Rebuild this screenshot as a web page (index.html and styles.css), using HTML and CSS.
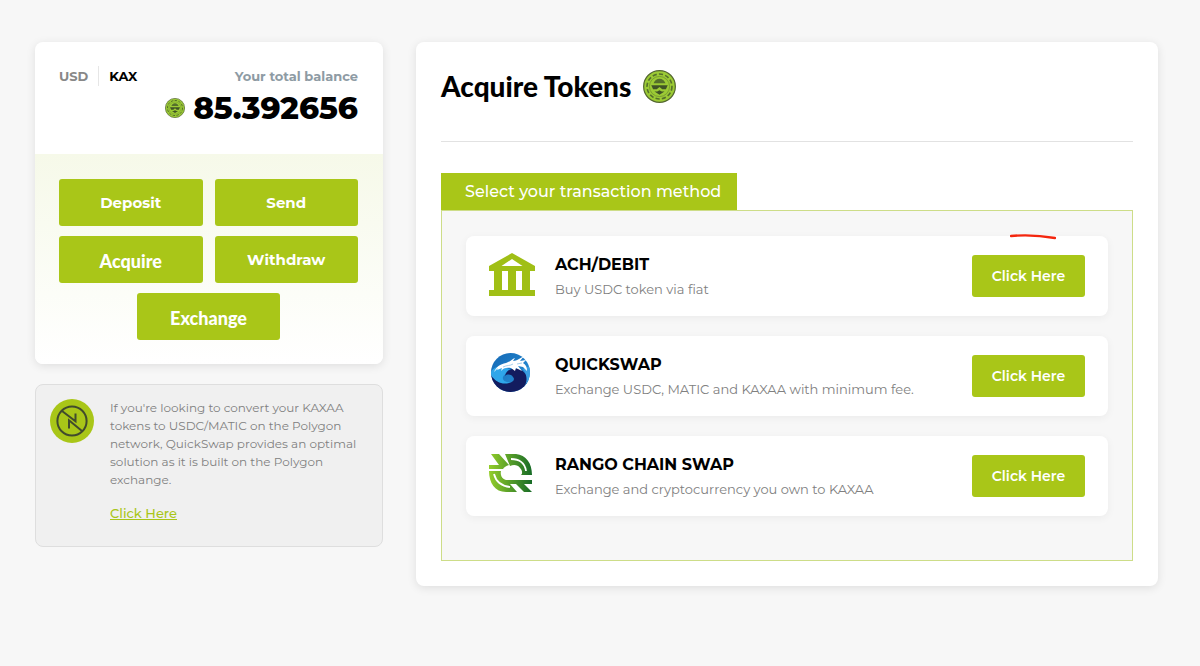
FILE: index.html
```html
<!DOCTYPE html>
<html lang="en">
<head>
    <meta charset="UTF-8">
    <meta name="viewport" content="width=device-width, initial-scale=1.0">
    <title>Acquire Tokens</title>
    <link rel="stylesheet" href="styles.css">
</head>
<body>
    <svg class="defs" aria-hidden="true">
        <symbol id="coin" viewBox="0 0 36 36">
            <circle cx="18" cy="18" r="17.3" fill="#9ccb35" stroke="#53662f" stroke-width="1.3"/>
            <circle cx="18" cy="18" r="13.6" fill="none" stroke="#55702b" stroke-width="1.8" stroke-dasharray="4.6 2.4"/>
            <circle cx="18" cy="18" r="11" fill="#9ccb35" stroke="#6c8d2e" stroke-width="0.8"/>
            <path d="M11.5 14.5c1-3 3.5-5 6.5-5s5.5 2 6.5 5z" fill="#55702b"/>
            <path d="M9 16.5h18l-2 4.5h-4l-3-2.5-3 2.5h-4z" fill="#405426"/>
            <path d="M12.500 23.500h3l2.500-1.500 2.500 1.500h3L18 27z" fill="#405426"/>
        </symbol>
    </svg>

    <main class="container">
        <aside class="sidebar">
            <section class="wallet">
                <div class="wallet-top">
                    <div class="currency">
                        <button type="button" class="currency-btn">USD</button>
                        <button type="button" class="currency-btn active">KAX</button>
                    </div>
                    <div class="balance">
                        <span class="balance-label">Your total balance</span>
                        <span class="balance-value">
                            <svg class="coin-small" aria-hidden="true"><use href="#coin"/></svg>
                            85.392656
                        </span>
                    </div>
                </div>
                <div class="wallet-actions">
                    <button type="button" class="btn">Deposit</button>
                    <button type="button" class="btn">Send</button>
                    <button type="button" class="btn btn-alt">Acquire</button>
                    <button type="button" class="btn">Withdraw</button>
                    <button type="button" class="btn btn-alt">Exchange</button>
                </div>
            </section>

            <section class="info">
                <svg class="info-icon" viewBox="0 0 44 44" aria-hidden="true">
                    <circle cx="22" cy="22" r="22" fill="#a9c618"/>
                    <g fill="none" stroke="#414b2d" stroke-width="2">
                        <circle cx="22" cy="22" r="14.6"/>
                        <path d="M11.7 11.7L25.5 22.200V14.5"/>
                        <path d="M32.3 32.3L19 21.3V29.5"/>
                    </g>
                </svg>
                <div>
                    <p class="info-text">If you're looking to convert your KAXAA tokens to USDC/MATIC on the Polygon network, QuickSwap provides an optimal solution as it is built on the Polygon exchange.</p>
                    <a href="#" class="info-link">Click Here</a>
                </div>
            </section>
        </aside>

        <section class="acquire">
            <header class="acquire-header">
                <h1>Acquire Tokens</h1>
                <svg class="coin-large" aria-hidden="true"><use href="#coin"/></svg>
            </header>

            <h2 class="tab">Select your transaction method</h2>
            <div class="methods">
                <article class="method">
                    <svg class="method-icon" viewBox="0 0 48 48" aria-hidden="true">
                        <path fill="#a0bf16" fill-rule="evenodd" d="M24 1L47 14v5H1v-5zM24 7L13.5 14h21z"/>
                        <path fill="#a0bf16" d="M6 18h8v20H6zM20 18h8v20h-8zM34 18h8v20h-8zM1 38h46v6H1z"/>
                    </svg>
                    <div class="method-body">
                        <h3>ACH/DEBIT</h3>
                        <p>Buy USDC token via fiat</p>
                    </div>
                    <button type="button" class="btn method-btn">Click Here</button>
                    <svg class="pen-mark" viewBox="0 0 46 6" aria-hidden="true">
                        <path d="M1 2Q22 0 45 4" fill="none" stroke="#f4260e" stroke-width="2.4" stroke-linecap="round"/>
                    </svg>
                </article>

                <article class="method">
                    <svg class="method-icon" viewBox="0 0 48 48" aria-hidden="true">
                        <defs>
                            <linearGradient id="sky" x1="0" y1="0" x2="1" y2="1">
                                <stop offset="0" stop-color="#1266b3"/>
                                <stop offset="1" stop-color="#2f9be0"/>
                            </linearGradient>
                            <clipPath id="disc"><circle cx="22.5" cy="20.5" r="19.5"/></clipPath>
                        </defs>
                        <g clip-path="url(#disc)">
                            <path d="M0 0h48v48H0z" fill="url(#sky)"/>
                            <path d="M2 21c4-7 10-8 17-5 4 2 6 4 4 7-3-2-7-1-8 2-1 4 4 6 9 5-5 5-17 2-22-9z" fill="#2fa6ea"/>
                            <path d="M2 22c5 8 12 11 19 9 5-1 6-4 4-6-2-3-6-3-8-1 1-6 8-9 14-7 7 3 10 9 8 15-4 9-12 11-20 10C8 40 2 33 2 22z" fill="#131c5f"/>
                            <path d="M35 17c4 6 5 12 1 18 8-4 10-14 6-21z" fill="#3b9fe2"/>
                        </g>
                        <path d="M6 20c2-5 6-8 12-9 4-1 6-4 9-5l-2 3c4 0 7-3 11-5l-4 5 6-1-3 3c3 2 4 4 4 8l-4-4-5-1 4 5-6-3-1 3-4-3c-4-1-8 0-10 3l1-3-5 2 1-2z" fill="#fff"/>
                        <path d="M15 15c4-2 7-1 10-3M29 12l5-1" fill="none" stroke="#8fc3e8" stroke-width="0.8"/>
                    </svg>
                    <div class="method-body">
                        <h3>QUICKSWAP</h3>
                        <p>Exchange USDC, MATIC and KAXAA with minimum fee.</p>
                    </div>
                    <button type="button" class="btn method-btn">Click Here</button>
                </article>

                <article class="method">
                    <svg class="method-icon" viewBox="0 0 48 48" aria-hidden="true">
                        <defs>
                            <linearGradient id="leaf" gradientUnits="userSpaceOnUse" x1="1" y1="0" x2="44" y2="0">
                                <stop offset="0" stop-color="#94ce2a"/>
                                <stop offset="1" stop-color="#176b27"/>
                            </linearGradient>
                        </defs>
                        <path fill="url(#leaf)" d="M17 2h11c10 1 16 9 16 21H33c2-2 1-5-1-7-2-3-6-4-10-2z"/>
                        <path fill="url(#leaf)" d="M3 2h8l10 11c-3 1-5 2-6 4H1v-4h10z"/>
                        <path fill="url(#leaf)" d="M1 19h12c-1 4 1 8 5 9h26v4h-8l8 8h-8l-8-8h-6l7 8H18C7 40 1 31 1 19z"/>
                        <!-- light lines inside both halves -->
                        <path fill="none" stroke="#fff" stroke-width="1.8" d="M23 7c8 0 14 4 15 12M6 22c2 8 7 12 16 13"/>
                        <path fill="none" stroke="#fff" stroke-width="1.2" d="M27 17c0-3 4-3 4 0"/>
                    </svg>
                    <div class="method-body">
                        <h3>RANGO CHAIN SWAP</h3>
                        <p>Exchange and cryptocurrency you own to KAXAA</p>
                    </div>
                    <button type="button" class="btn method-btn">Click Here</button>
                </article>
            </div>
        </section>
    </main>
</body>
</html>
```
FILE: styles.css
```css
* {
    box-sizing: border-box;
}

body {
    margin: 0;
    background-color: #f7f7f7;
    font-family: Montserrat, Inter, sans-serif;
    color: #000;
}

h1, h2, h3, p {
    margin: 0;
}

button {
    font-family: inherit;
    cursor: pointer;
}

.defs {
    display: none;
}

.container {
    display: grid;
    grid-template-columns: 348px 1fr;
    gap: 33px;
    align-items: start;
    padding: 42px 42px 42px 35px;
}

.sidebar {
    display: grid;
    gap: 20px;
}

.wallet, .acquire {
    background-color: #fff;
    border-radius: 8px;
    box-shadow: 0 2px 10px rgba(0, 0, 0, 0.1);
}

/* Wallet card */
.wallet {
    overflow: hidden;
}

.wallet-top {
    display: flex;
    justify-content: space-between;
    align-items: flex-start;
    padding: 24px 25px 24px 24px;
}

.currency {
    display: flex;
}

.currency-btn {
    padding: 0 10px 0 0;
    border: 0;
    background: none;
    color: #888;
    font-size: 13px;
    font-weight: 700;
    line-height: 20px;
}

.currency-btn.active {
    padding: 0 0 0 10px;
    border-left: 1px solid #e6e6e6;
    color: #000;
}

.balance {
    display: grid;
    justify-items: end;
}

.balance-label {
    color: #8e9ba4;
    font-size: 13px;
    font-weight: 700;
    line-height: 20px;
}

.balance-value {
    display: flex;
    align-items: center;
    gap: 8px;
    font-size: 31px;
    font-weight: 800;
    line-height: 44px;
}

.coin-small {
    width: 20px;
    height: 20px;
}

.wallet-actions {
    display: flex;
    flex-wrap: wrap;
    justify-content: center;
    gap: 10px 12px;
    padding: 25px 25px 24px 24px;
    background: linear-gradient(#f6f9e9, #fff);
}

.btn {
    border: 0;
    border-radius: 3px;
    background-color: #a9c618;
    color: #fff;
    font-size: 15px;
    font-weight: 700;
}

.btn:hover {
    background-color: #98b315;
}

.wallet-actions .btn {
    flex: 0 0 calc(50% - 6px);
    height: 47px;
}

.wallet-actions .btn-alt {
    padding-top: 4px;
    font-family: Lato, sans-serif;
    font-size: 18px;
    font-weight: 900;
}

/* Info box */
.info {
    display: flex;
    align-items: flex-start;
    gap: 16px;
    padding: 14px 24px 24px 14px;
    border: 1px solid #dedede;
    border-radius: 8px;
    background-color: #f0f0f0;
}

.info-icon {
    flex: none;
    width: 44px;
    height: 44px;
}

.info-text {
    margin-bottom: 14px;
    color: #808080;
    font-size: 12px;
    line-height: 18px;
}

.info-link {
    color: #a9c618;
    font-size: 13px;
    font-weight: 500;
    line-height: 18px;
}

/* Acquire card */
.acquire {
    padding: 25px;
}

.acquire-header {
    display: flex;
    align-items: center;
    gap: 12px;
    margin-bottom: 31px;
    padding-bottom: 36px;
    border-bottom: 1px solid #e2e2e2;
}

.acquire-header h1 {
    font-family: Lato, sans-serif;
    font-size: 28px;
    font-weight: 900;
    line-height: 38px;
}

.coin-large {
    width: 33px;
    height: 33px;
}

.tab {
    width: fit-content;
    padding: 0 16px 0 24px;
    background-color: #a9c618;
    color: #fff;
    font-size: 16px;
    font-weight: 500;
    line-height: 37px;
}

.methods {
    display: grid;
    gap: 20px;
    padding: 25px 24px 44px;
    border: 1px solid #cddd88;
    background-color: #f7f7f7;
}

.method {
    position: relative;
    display: flex;
    align-items: center;
    min-height: 80px;
    padding: 0 23px 0 22px;
    border-radius: 8px;
    background-color: #fff;
    box-shadow: 0 2px 8px rgba(0, 0, 0, 0.05);
}

.method-icon {
    flex: none;
    width: 48px;
    height: 48px;
}

.method-body {
    flex: 1;
    padding: 2px 19px 0;
}

.method h3 {
    font-size: 16px;
    font-weight: 700;
    line-height: 24px;
}

.method p {
    color: #808080;
    font-size: 13px;
    line-height: 24px;
}

.method-btn {
    width: 113px;
    height: 42px;
    font-size: 14px;
    font-weight: 600;
}

.pen-mark {
    position: absolute;
    top: -2px;
    right: 52px;
    width: 46px;
    height: 6px;
}
```
